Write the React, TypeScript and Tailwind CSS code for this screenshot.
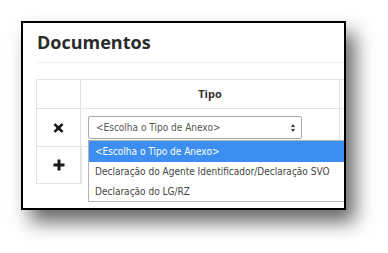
import React from "react";

const XIcon = () => (
  <svg width="11" height="10" viewBox="0 0 11 10">
    <path d="M0.5 1.8 L2.3 0.2 L5.5 3 L8.7 0.2 L10.5 1.8 L7.5 5 L10.5 8.2 L8.7 9.8 L5.5 7 L2.3 9.8 L0.5 8.2 L3.5 5 Z" fill="#1a1a1a" />
  </svg>
);

const PlusIcon = () => (
  <svg width="12" height="12" viewBox="0 0 12 12">
    <path d="M4.5 0.5 H7.5 V4.5 H11.5 V7.5 H7.5 V11.5 H4.5 V7.5 H0.5 V4.5 H4.5 Z" fill="#1a1a1a" />
  </svg>
);

export default function App() {
  const opt = "font-['DejaVu_Sans_Condensed','DejaVu_Sans',sans-serif] text-[10px]";
  return (
    <div className="w-[388px] h-[253px] bg-white overflow-hidden">
      <div className="ml-[21px] mt-[21px] w-[325px] h-[189px] border-2 border-black bg-white shadow-[9px_12px_18px_rgba(0,0,0,0.6)] overflow-hidden relative">
        <div className="pl-[14px] font-['Open_Sans',sans-serif]">
          <div className="pt-[5px] h-[40px] border-b border-[#eeeeee] text-[18px] font-bold text-[#2b2b2b] leading-[28px]">
            Documentos
          </div>
          <div className="mt-[16px] -ml-[1px] w-[400px]">
            <div className="flex border border-[#e3e3e3] h-[30px]">
              <div className="w-[44px] border-r border-[#e3e3e3]" />
              <div className="w-[259px] border-r border-[#e3e3e3] flex items-center justify-center text-[11px] font-bold text-[#333]">
                Tipo
              </div>
              <div className="flex-1" />
            </div>
            <div className="flex border-x border-b border-[#e3e3e3] h-[38px]">
              <div className="w-[44px] border-r border-[#e3e3e3] flex items-center justify-center">
                <XIcon />
              </div>
              <div className="w-[259px] border-r border-[#e3e3e3] pl-[7px] pt-[7px]">
                <div className="w-[214px] h-[23px] border border-[#a9a9a9] rounded-[2px] flex items-center justify-between pl-[7px] pr-[6px] text-[#555]">
                  <span className={opt}>&lt;Escolha o Tipo de Anexo&gt;</span>
                  <svg width="4" height="8" viewBox="0 0 4 8">
                    <path d="M2 0 L4 3 H0 Z M2 8 L4 5 H0 Z" fill="#333" />
                  </svg>
                </div>
              </div>
              <div className="flex-1" />
            </div>
            <div className="flex border-x border-b border-[#e3e3e3] h-[37px] w-[46px]">
              <div className="w-[44px] border-r border-[#e3e3e3] flex items-center justify-center">
                <PlusIcon />
              </div>
            </div>
          </div>
        </div>
        <div className="absolute left-[65px] top-[117px] w-[300px] h-[62px] border border-[#b5b5b5] bg-white text-[#444]">
          <div className={`${opt} h-[21px] bg-[#3c8ff1] text-white pl-[6px] leading-[21px]`}>
            &lt;Escolha o Tipo de Anexo&gt;
          </div>
          <div className={`${opt} h-[20px] pl-[6px] leading-[20px]`}>
            Declaração do Agente Identificador/Declaração SVO
          </div>
          <div className={`${opt} h-[19px] pl-[6px] leading-[19px]`}>
            Declaração do LG/RZ
          </div>
        </div>
      </div>
    </div>
  );
}
